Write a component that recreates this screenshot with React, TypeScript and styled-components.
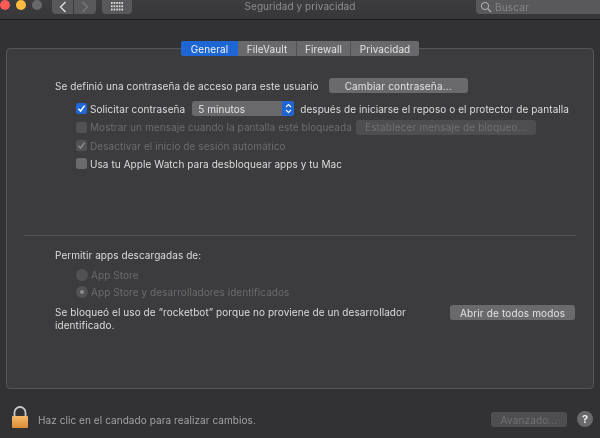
import React from "react";
import styled, { createGlobalStyle } from "styled-components";

const Global = createGlobalStyle`
  html, body { margin: 0; padding: 0; background: #323234; }
  #root { width: 600px; height: 438px; overflow: hidden; }
  * { box-sizing: border-box; }
`;

const Win = styled.div`
  width: 600px; height: 438px; display: flex; flex-direction: column; overflow: hidden;
  background: #323234; color: #d9d9d9;
  font-family: "Inter", "Liberation Sans", sans-serif; font-size: 10px; letter-spacing: 0.07px;
  filter: blur(0.4px);
`;
const TitleBar = styled.header`
  height: 20px; flex: none; display: flex; align-items: flex-start; position: relative;
  background: linear-gradient(#3d3d3f, #37373a); border-bottom: 1px solid #1c1c1d;
`;
const Light = styled.span<{ $c: string; $ml: number }>`
  width: 10px; height: 10px; border-radius: 50%; background: ${p => p.$c};
  margin-left: ${p => p.$ml}px; flex: none;
`;
const Lights = styled.div`display: flex;`;
const ToolBtn = styled.button<{ $w: number; $ml: number; $side?: "l" | "r" }>`
  width: ${p => p.$w}px; height: 14px; margin-left: ${p => p.$ml}px; padding: 0; border: 0; flex: none;
  background: #59595b; display: flex; align-items: center; justify-content: center;
  border-radius: ${p => p.$side === "l" ? "0 0 0 4px" : p.$side === "r" ? "0 0 4px 0" : "0 0 4px 4px"};
`;
const Title = styled.div`
  position: absolute; left: 0; right: 0; top: -1px; text-align: center; color: #8e8e90; line-height: 14px;
`;
const Search = styled.div`
  margin-left: auto; width: 124px; height: 14px; background: #59595b; border-radius: 0 0 0 4px;
  display: flex; align-items: center; gap: 3px; padding-left: 4px; color: #858587; letter-spacing: 0.2px;
`;
const Body = styled.main`
  flex: 1; display: flex; flex-direction: column; padding: 21px 6px 0;
`;
const Tabs = styled.div`
  align-self: center; display: flex; height: 15px; border-radius: 3px; overflow: hidden; background: #69696b;
  margin-bottom: -8px; position: relative; z-index: 1;
`;
const Tab = styled.div<{ $on?: boolean; $w: number; $flush?: boolean }>`
  width: ${p => p.$w}px; display: flex; align-items: center; justify-content: center;
  background: ${p => p.$on ? "#1d66d3" : "#69696b"}; color: ${p => p.$on ? "#f2f2f2" : "#e2e2e2"};
  border-left: ${p => p.$on || p.$flush ? "0" : "1px solid #525254"};
`;
const Panel = styled.section`
  height: 341px; border: 1px solid #555557; border-radius: 4px; background: #3c3c3e;
  display: flex; flex-direction: column; padding: 29px 17px 0;
`;
const Top = styled.div`height: 157px; display: flex; flex-direction: column; padding-left: 31px;`;
const FirstRow = styled.div`height: 15px; display: flex; align-items: center; margin-bottom: 8px;`;
const Label = styled.span<{ $dim?: boolean }>`
  color: ${p => p.$dim ? "#6c6c6e" : "#dcdcdc"}; white-space: nowrap;
`;
const Btn = styled.button<{ $w: number; $dis?: boolean; $ml?: number }>`
  width: ${p => p.$w}px; height: 15px; flex: none; margin-left: ${p => p.$ml ?? 0}px; padding: 0; border: 0; border-radius: 3px;
  background: ${p => p.$dis ? "#4e4e50" : "#6a6a6c"}; color: ${p => p.$dis ? "#717173" : "#e2e2e2"};
  font: inherit; letter-spacing: 0.15px; display: flex; align-items: center; justify-content: center;
`;
const CheckRow = styled.div<{ $h: number }>`
  height: ${p => p.$h}px; display: flex; align-items: center; margin-left: 21px; gap: 3px;
`;
const Box = styled.span<{ $state: "on" | "off" | "dim" | "dimon" }>`
  width: 11px; height: 11px; flex: none; border-radius: 2.5px; display: flex; align-items: center; justify-content: center;
  background: ${p => p.$state === "on" ? "#2068d6" : p.$state === "off" ? "#6a6a6c" : "#525254"};
`;
const Select = styled.div`
  width: 102px; height: 15px; margin: 0 3px 0 4px; border-radius: 3px; overflow: hidden; flex: none; background: #69696b;
  display: flex; align-items: center; justify-content: space-between; padding-left: 6px; color: #e2e2e2;
`;
const Stepper = styled.span`
  width: 12px; height: 15px; background: #1d66d3; display: flex; align-items: center; justify-content: center;
`;
const Divider = styled.hr`height: 1px; margin: 0; border: 0; background: #525254; flex: none;`;
const Lower = styled.div`display: flex; flex-direction: column; padding: 12px 1px 0 31px;`;
const Heading = styled.div`height: 14px; line-height: 14px; margin-bottom: 4px; color: #dcdcdc;`;
const RadioRow = styled.div`height: 17px; display: flex; align-items: center; gap: 3px; margin-left: 21px;`;
const Radio = styled.span<{ $sel?: boolean }>`
  width: 12px; height: 12px; border-radius: 50%; background: #525254; flex: none; display: flex; align-items: center; justify-content: center;
  &::after { content: ""; width: 4px; height: 4px; border-radius: 50%; background: ${p => p.$sel ? "#8d8d8f" : "transparent"}; }
`;
const BlockRow = styled.div`display: flex; align-items: flex-start; justify-content: space-between; margin-top: 5px;`;
const BlockText = styled.p`margin: 0; width: 370px; line-height: 13px; padding-top: 1px; color: #dcdcdc;`;
const Footer = styled.footer`
  height: 49px; display: flex; align-items: center; padding-left: 5px; padding-top: 12px;
`;
const LockIcon = styled.svg`flex: none; margin-bottom: 5px;`;
const Hint = styled.span`color: #a2a2a4; margin-left: 9px;`;
const Help = styled.span`
  width: 16px; height: 16px; margin-left: 10px; margin-right: 1px; border-radius: 50%; background: #69696b; color: #ececec; flex: none; margin-top: -1px;
  display: flex; align-items: center; justify-content: center; font-weight: 700; font-size: 11px;
`;
const Spacer = styled.span`flex: 1;`;

const Check = ({ c }: { c: string }) => (
  <svg width="9" height="9" viewBox="0 0 9 9"><path d="M1.4 4.8 3.6 7 7.6 1.6" fill="none" stroke={c} strokeWidth="1.5" /></svg>
);

export default function App() {
  return (
    <Win>
      <Global />
      <TitleBar>
        <Lights>
          <Light $c="#fc5a55" $ml={0} />
          <Light $c="#fdbc40" $ml={6} />
          <Light $c="#68686a" $ml={6} />
        </Lights>
        <ToolBtn $w={21} $ml={10} $side="l">
          <svg width="8" height="12" viewBox="0 0 8 12"><path d="M6.5 1 1.5 6l5 5" fill="none" stroke="#e2e2e2" strokeWidth="1.3" /></svg>
        </ToolBtn>
        <ToolBtn $w={22} $ml={1} $side="r">
          <svg width="8" height="12" viewBox="0 0 8 12"><path d="M1.500 1l5 5-5 5" fill="none" stroke="#79797b" strokeWidth="1.3" /></svg>
        </ToolBtn>
        <ToolBtn $w={30} $ml={6}>
          <svg width="12" height="10" viewBox="0 0 12 10" fill="#dcdcdc">
            {[0, 3.3, 6.6].map(y => [0, 2.6, 5.2, 7.8, 10.4].map(x => <rect key={`${x}-${y}`} x={x} y={y} width="1.6" height="1.9" />))}
          </svg>
        </ToolBtn>
        <Title>Seguridad y privacidad</Title>
        <Search>
          <svg width="12" height="12" viewBox="0 0 12 12"><circle cx="5" cy="5" r="3.6" fill="none" stroke="#b5b5b7" strokeWidth="1" /><path d="M7.7 7.7 11 11" stroke="#b5b5b7" strokeWidth="1.2" /></svg>
          Buscar
        </Search>
      </TitleBar>
      <Body>
        <Tabs>
          <Tab $on $w={57}>General</Tab>
          <Tab $w={58} $flush>FileVault</Tab>
          <Tab $w={54}>Firewall</Tab>
          <Tab $w={69}>Privacidad</Tab>
        </Tabs>
        <Panel>
          <Top>
            <FirstRow>
              <Label>Se definió una contraseña de acceso para este usuario</Label>
              <Btn $w={139} $ml={10}>Cambiar contraseña...</Btn>
            </FirstRow>
            <CheckRow $h={15}>
              <Box $state="on"><Check c="#fff" /></Box>
              <Label>Solicitar contraseña</Label>
              <Select>5 minutos<Stepper>
                <svg width="7" height="11" viewBox="0 0 7 11"><path d="M1 4 3.5 1.5 6 4M1 7l2.500 2.500L6 7" fill="none" stroke="#fff" strokeWidth="1.1" /></svg>
              </Stepper></Select>
              <Label>después de iniciarse el reposo o el protector de pantalla</Label>
            </CheckRow>
            <CheckRow $h={22}>
              <Box $state="dim" />
              <Label $dim>Mostrar un mensaje cuando la pantalla esté bloqueada</Label>
              <Btn $w={180} $dis $ml={1}>Establecer mensaje de bloqueo...</Btn>
            </CheckRow>
            <CheckRow $h={15}>
              <Box $state="dimon"><Check c="#8a8a8c" /></Box>
              <Label $dim>Desactivar el inicio de sesión automático</Label>
            </CheckRow>
            <CheckRow $h={21}>
              <Box $state="off" />
              <Label>Usa tu Apple Watch para desbloquear apps y tu Mac</Label>
            </CheckRow>
          </Top>
          <Divider />
          <Lower>
            <Heading>Permitir apps descargadas de:</Heading>
            <RadioRow><Radio /><Label $dim>App Store</Label></RadioRow>
            <RadioRow><Radio $sel /><Label $dim>App Store y desarrolladores identificados</Label></RadioRow>
            <BlockRow>
              <BlockText>Se bloqueó el uso de “rocketbot” porque no proviene de un desarrollador identificado.</BlockText>
              <Btn $w={125}>Abrir de todos modos</Btn>
            </BlockRow>
          </Lower>
        </Panel>
        <Footer>
          <LockIcon width="18" height="23" viewBox="0 0 18 23">
            <defs><linearGradient id="lk" x1="0" y1="0" x2="0" y2="1"><stop offset="0" stopColor="#f7b96b" /><stop offset="1" stopColor="#d98d35" /></linearGradient></defs>
            <path d="M3.500 11V6.500a5.500 5.500 0 0 1 11 0V11" fill="none" stroke="#c9c9cb" strokeWidth="1.8" />
            <rect x="1" y="10" width="16" height="12" rx="1" fill="url(#lk)" />
          </LockIcon>
          <Hint>Haz clic en el candado para realizar cambios.</Hint>
          <Spacer />
          <Btn $w={76} $dis>Avanzado...</Btn>
          <Help>?</Help>
        </Footer>
      </Body>
    </Win>
  );
}
